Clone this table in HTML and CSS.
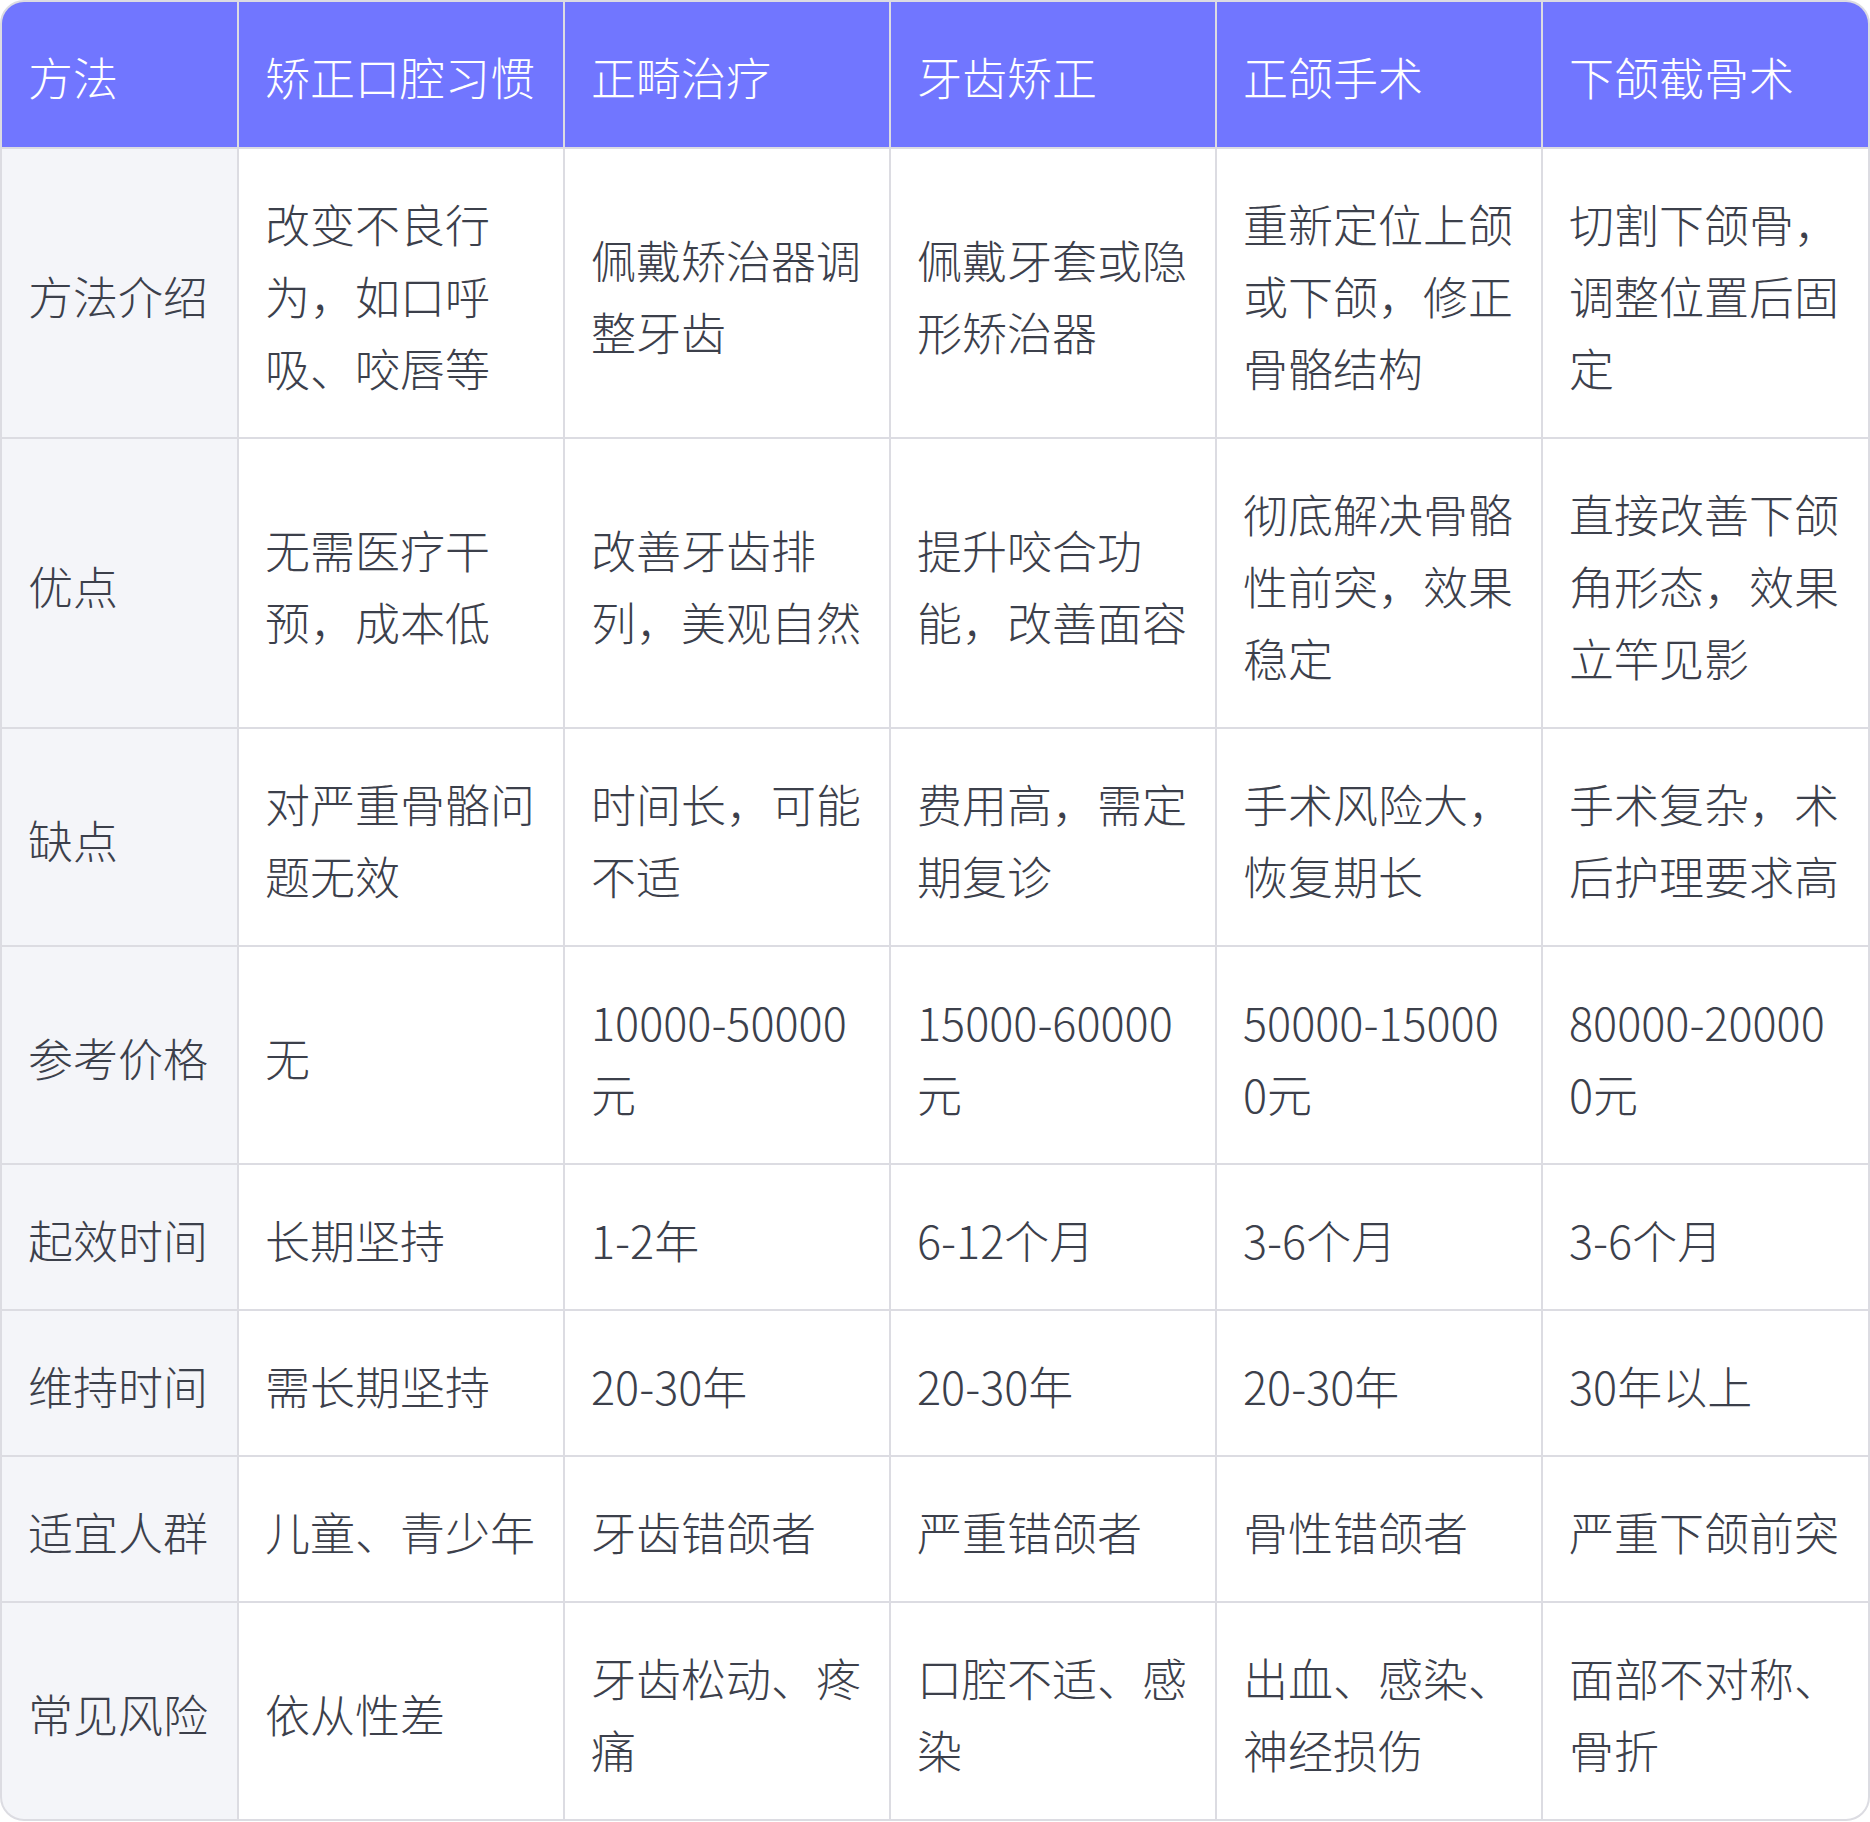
FILE: index.html
```html
<!DOCTYPE html>
<html lang="zh-CN">
<head>
<meta charset="utf-8">
<title>方法对比</title>
<link rel="stylesheet" href="styles.css">
</head>
<body>
<div class="table-wrap">
  <div class="grid">
    <div class="cell head">方法</div>
    <div class="cell head">矫正口腔习惯</div>
    <div class="cell head">正畸治疗</div>
    <div class="cell head">牙齿矫正</div>
    <div class="cell head">正颌手术</div>
    <div class="cell head">下颌截骨术</div>

    <div class="cell label">方法介绍</div>
    <div class="cell">改变不良行为，如口呼吸、咬唇等</div>
    <div class="cell">佩戴矫治器调整牙齿</div>
    <div class="cell">佩戴牙套或隐形矫治器</div>
    <div class="cell">重新定位上颌或下颌，修正骨骼结构</div>
    <div class="cell">切割下颌骨，调整位置后固定</div>

    <div class="cell label">优点</div>
    <div class="cell">无需医疗干预，成本低</div>
    <div class="cell">改善牙齿排列，美观自然</div>
    <div class="cell">提升咬合功能，改善面容</div>
    <div class="cell">彻底解决骨骼性前突，效果稳定</div>
    <div class="cell">直接改善下颌角形态，效果立竿见影</div>

    <div class="cell label">缺点</div>
    <div class="cell">对严重骨骼问题无效</div>
    <div class="cell">时间长，可能不适</div>
    <div class="cell">费用高，需定期复诊</div>
    <div class="cell">手术风险大，恢复期长</div>
    <div class="cell">手术复杂，术后护理要求高</div>

    <div class="cell label">参考价格</div>
    <div class="cell">无</div>
    <div class="cell num">10000-50000元</div>
    <div class="cell num">15000-60000元</div>
    <div class="cell num">50000-150000元</div>
    <div class="cell num">80000-200000元</div>

    <div class="cell label">起效时间</div>
    <div class="cell">长期坚持</div>
    <div class="cell">1-2年</div>
    <div class="cell">6-12个月</div>
    <div class="cell">3-6个月</div>
    <div class="cell">3-6个月</div>

    <div class="cell label">维持时间</div>
    <div class="cell">需长期坚持</div>
    <div class="cell">20-30年</div>
    <div class="cell">20-30年</div>
    <div class="cell">20-30年</div>
    <div class="cell">30年以上</div>

    <div class="cell label">适宜人群</div>
    <div class="cell">儿童、青少年</div>
    <div class="cell">牙齿错颌者</div>
    <div class="cell">严重错颌者</div>
    <div class="cell">骨性错颌者</div>
    <div class="cell">严重下颌前突</div>

    <div class="cell label">常见风险</div>
    <div class="cell">依从性差</div>
    <div class="cell">牙齿松动、疼痛</div>
    <div class="cell">口腔不适、感染</div>
    <div class="cell">出血、感染、神经损伤</div>
    <div class="cell">面部不对称、骨折</div>
  </div>
</div>
</body>
</html>
```
FILE: styles.css
```css
html, body {
  margin: 0;
  padding: 0;
  background: #ffffff;
}

body {
  font-family: "Noto Sans CJK SC", "Noto Sans", sans-serif;
  font-weight: 300;
  color: #3c404b;
}

.table-wrap {
  width: 1870px;
  box-sizing: border-box;
  border: 2px solid #dcdce2;
  border-radius: 24px;
  overflow: hidden;
  background: #dcdce2;
}

.grid {
  display: grid;
  grid-template-columns: 235px 324px 324px 324px 324px 325px;
  gap: 2px;
}

.cell {
  background: #ffffff;
  padding: 39px 26px 33px;
  font-size: 45px;
  line-height: 72px;
  display: flex;
  align-items: center;
  overflow-wrap: anywhere;
}

.cell.num {
  word-break: break-all;
}

.cell.head {
  background: #7176ff;
  color: #ffffff;
  padding-bottom: 34px;
}

.cell.label {
  background: #f4f5f9;
}
```
